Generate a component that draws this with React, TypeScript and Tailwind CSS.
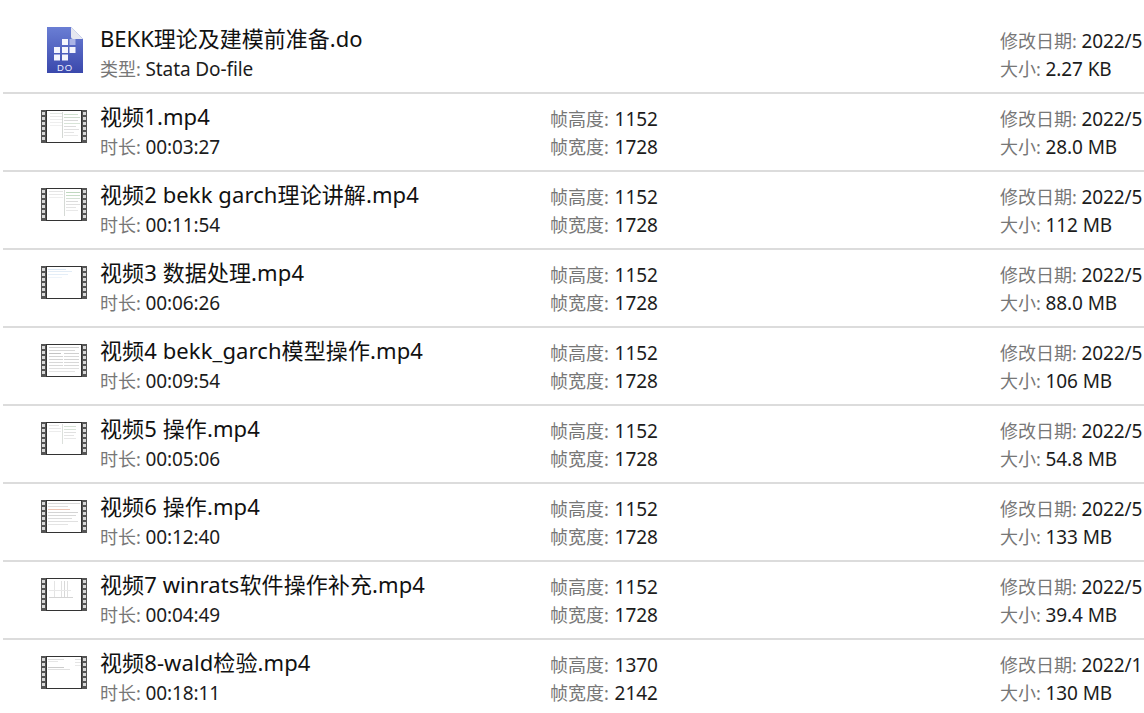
import React from "react";

const font = { fontFamily: '"Noto Sans","Noto Sans CJK SC",sans-serif' };

type Line = [number, number, number, number, string];

const thumbs: Record<string, Line[]> = {
  a: [[3,1,12,1,"#e2e6e2"],[3,4,12,1,"#e8e8e8"],[3,7,12,1,"#ececec"],[3,10,12,1,"#eeeeee"],[3,13,12,1,"#f0f0f0"],[15,0,1,26,"#d4d8d4"],[17,2,14,1,"#cfe0cf"],[17,5,16,1,"#cfdccf"],[17,8,14,1,"#dadada"],[17,11,16,1,"#d8e4d8"],[17,14,12,1,"#dcdcdc"],[17,17,15,1,"#e0e0e0"],[17,20,10,1,"#e4e4e4"],[17,23,14,1,"#e8e8e8"]],
  b: [[2,1,14,1,"#e4e4e4"],[2,4,14,1,"#e8e8e8"],[2,7,14,1,"#eeeeee"],[17,0,1,26,"#d6dad6"],[19,2,14,1,"#bfd8bf"],[19,5,14,1,"#c8dec8"],[19,8,14,1,"#d4e2d4"],[19,11,12,1,"#dcdcdc"],[19,14,14,1,"#e0e0e0"],[19,17,10,1,"#e4e4e4"],[19,20,12,1,"#e8e8e8"]],
  c: [[1,1,18,1,"#dce8f4"],[1,3,24,1,"#e2ecf6"],[1,6,20,1,"#e4eef8"],[1,9,14,1,"#eef4fa"]],
  d: [[2,1,30,1,"#d0d0d0"],[2,4,26,1,"#d8d8d8"],[2,7,12,1,"#c4c4c4"],[17,7,15,1,"#d0d0d0"],[2,10,14,1,"#d4d4d4"],[17,10,15,1,"#d8d8d8"],[2,13,14,1,"#d4d4d4"],[17,13,15,1,"#d4d4d4"],[2,16,14,1,"#d8d8d8"],[17,16,15,1,"#d8d8d8"],[2,19,14,1,"#d8d8d8"],[17,19,15,1,"#d8d8d8"],[2,22,30,1,"#e0e0e0"],[2,25,26,1,"#e4e4e4"]],
  e: [[2,1,10,1,"#e4e4e4"],[2,4,12,1,"#e8e8e8"],[2,7,12,1,"#ececec"],[15,0,1,20,"#dce0dc"],[17,2,12,1,"#d4e0d4"],[17,5,12,1,"#d8e4d8"],[17,8,12,1,"#e0e0e0"],[17,11,10,1,"#e4e4e4"],[17,14,12,1,"#e8e8e8"]],
  f: [[1,1,32,1,"#d8d8d8"],[1,4,20,1,"#dedede"],[1,7,22,1,"#ecc4b4"],[1,10,30,1,"#d4d4d4"],[1,13,28,1,"#d8d8d8"],[1,16,24,1,"#dcdcdc"],[1,19,30,1,"#e0e0e0"],[1,22,20,1,"#e4e4e4"]],
  g: [[7,1,1,17,"#e4e4e4"],[14,1,1,17,"#e0e0e0"],[17,1,1,17,"#d8d8d8"],[20,1,1,17,"#e0e0e0"],[2,10,22,1,"#e8e8e8"],[2,17,24,1,"#d4d4d4"]],
  h: [[1,1,16,1,"#dcdcdc"],[1,3,10,1,"#e6e6e6"],[1,9,16,1,"#cccccc"],[1,11,22,1,"#e0e0e0"],[28,1,6,1,"#e0e0e0"],[28,4,6,1,"#e4e4e4"],[28,7,6,1,"#e8e8e8"]],
};

function FilmIcon({ kind }: { kind: string }) {
  const holes = [2, 7, 12, 17, 22, 27];
  return (
    <svg width="46" height="33" viewBox="0 0 46 33" className="block">
      <rect x="0" y="0" width="46" height="33" fill="#555555" />
      {holes.map((y) => (
        <g key={y}>
          <rect x="1" y={y} width="3" height="3" fill="#d8d8d8" />
          <rect x="42" y={y} width="3" height="3" fill="#d8d8d8" />
        </g>
      ))}
      <rect x="5.5" y="0.5" width="35" height="32" fill="#ffffff" stroke="#333333" strokeWidth="1" />
      <g transform="translate(6,2)">
        {thumbs[kind].map((l, i) => (
          <rect key={i} x={l[0]} y={l[1]} width={l[2]} height={l[3]} fill={l[4]} />
        ))}
      </g>
    </svg>
  );
}

function DoIcon() {
  const cells: [number, number, string][] = [
    [15, 12, "#f4f5fd"], [22.5, 12, "#aab4e6"],
    [7, 20, "#f4f5fd"], [15, 20, "#f4f5fd"], [22.5, 20, "#f4f5fd"],
    [7, 27.5, "#f4f5fd"], [15, 27.5, "#f4f5fd"],
  ];
  return (
    <svg width="36" height="46" viewBox="0 0 36 46" className="block">
      <defs>
        <linearGradient id="dg" x1="0" y1="0" x2="0" y2="1">
          <stop offset="0" stopColor="#6a7ed4" />
          <stop offset="1" stopColor="#3a48ac" />
        </linearGradient>
      </defs>
      <path d="M0 0H24L36 12V46H0Z" fill="url(#dg)" />
      <path d="M24 0L36 12H26Q24 12 24 10Z" fill="#e6e8f0" />
      {cells.map(([x, y, c], i) => (
        <rect key={i} x={x} y={y} width="6" height="6" fill={c} />
      ))}
      <text x="18" y="43.5" textAnchor="middle" fontSize="9.5" fill="#e8ebff" letterSpacing="1" style={{ fontFamily: '"Liberation Sans",sans-serif' }}>DO</text>
    </svg>
  );
}

function Meta({ label, value }: { label: string; value: string }) {
  return (
    <div className="h-7 whitespace-nowrap text-[18px] leading-7">
      <span className="text-[#777777]">{label}: </span>
      <span className="text-[19px] tracking-[-0.1px] text-[#1c1c1c]">{value}</span>
    </div>
  );
}

function FrameMeta({ label, value }: { label: string; value: string }) {
  return (
    <div className="h-7 whitespace-nowrap text-[18px] leading-7">
      <span className="text-[#777777]">{label}: </span>
      <span className="ml-px text-[19px] text-[#1c1c1c]">{value}</span>
    </div>
  );
}

type Row = { name: string; dur: string; h: string; w: string; date: string; size: string; kind: string };

const rows: Row[] = [
  { name: "视频1.mp4", dur: "00:03:27", h: "1152", w: "1728", date: "2022/5", size: "28.0 MB", kind: "a" },
  { name: "视频2 bekk garch理论讲解.mp4", dur: "00:11:54", h: "1152", w: "1728", date: "2022/5", size: "112 MB", kind: "b" },
  { name: "视频3 数据处理.mp4", dur: "00:06:26", h: "1152", w: "1728", date: "2022/5", size: "88.0 MB", kind: "c" },
  { name: "视频4 bekk_garch模型操作.mp4", dur: "00:09:54", h: "1152", w: "1728", date: "2022/5", size: "106 MB", kind: "d" },
  { name: "视频5 操作.mp4", dur: "00:05:06", h: "1152", w: "1728", date: "2022/5", size: "54.8 MB", kind: "e" },
  { name: "视频6 操作.mp4", dur: "00:12:40", h: "1152", w: "1728", date: "2022/5", size: "133 MB", kind: "f" },
  { name: "视频7 winrats软件操作补充.mp4", dur: "00:04:49", h: "1152", w: "1728", date: "2022/5", size: "39.4 MB", kind: "g" },
  { name: "视频8-wald检验.mp4", dur: "00:18:11", h: "1370", w: "2142", date: "2022/1", size: "130 MB", kind: "h" },
];

export default function App() {
  return (
    <div className="h-[713px] w-[1144px] overflow-hidden bg-white" style={font}>
      <div className="ml-[3px] flex h-[94px] border-b-2 border-[#dcdcdc] pt-[23px]">
        <div className="w-[44px] shrink-0" />
        <div className="w-[53px] shrink-0 pt-[4px]"><DoIcon /></div>
        <div className="w-[900px] shrink-0">
          <div className="h-[32px] text-[22px] leading-[30px] text-[#111111] whitespace-nowrap">BEKK理论及建模前准备.do</div>
          <Meta label="类型" value="Stata Do-file" />
        </div>
        <div className="w-[144px] shrink-0 pt-[4px]">
          <Meta label="修改日期" value="2022/5" />
          <Meta label="大小" value="2.27 KB" />
        </div>
      </div>
      {rows.map((r) => (
        <div key={r.name} className="ml-[3px] flex h-[78px] border-b-2 border-[#dcdcdc] pt-[7px]">
          <div className="w-[97px] shrink-0 pl-[38px] pt-[9px]"><FilmIcon kind={r.kind} /></div>
          <div className="w-[450px] shrink-0">
            <div className="h-[32px] text-[22px] leading-[30px] tracking-[0.1px] text-[#111111] whitespace-nowrap">{r.name}</div>
            <Meta label="时长" value={r.dur} />
          </div>
          <div className="w-[450px] shrink-0 pt-[4px]">
            <FrameMeta label="帧高度" value={r.h} />
            <FrameMeta label="帧宽度" value={r.w} />
          </div>
          <div className="w-[144px] shrink-0 pt-[4px]">
            <Meta label="修改日期" value={r.date} />
            <Meta label="大小" value={r.size} />
          </div>
        </div>
      ))}
    </div>
  );
}
